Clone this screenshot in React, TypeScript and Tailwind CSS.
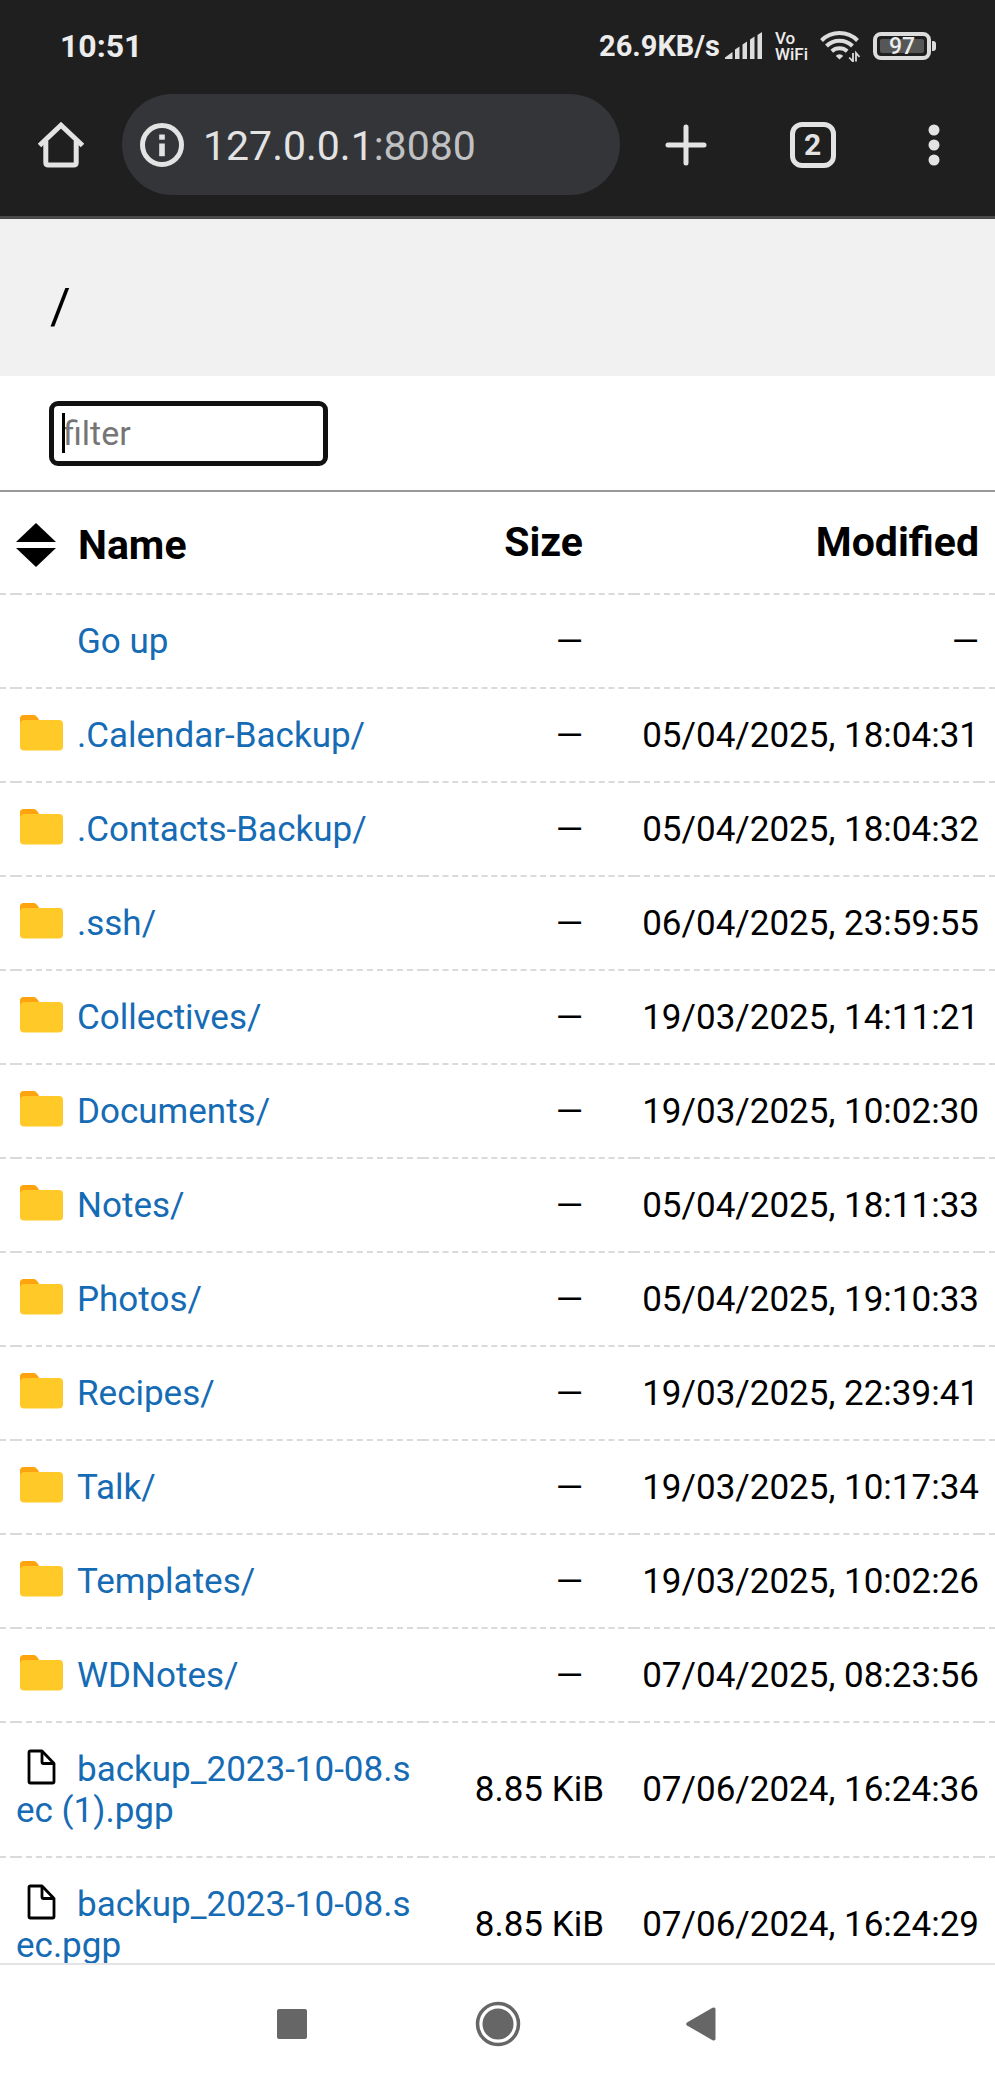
import React from "react";

type Entry = { name: string; kind: "up" | "folder" | "file"; size: string; modified: string };

const entries: Entry[] = [
  { name: "Go up", kind: "up", size: "—", modified: "—" },
  { name: ".Calendar-Backup/", kind: "folder", size: "—", modified: "05/04/2025, 18:04:31" },
  { name: ".Contacts-Backup/", kind: "folder", size: "—", modified: "05/04/2025, 18:04:32" },
  { name: ".ssh/", kind: "folder", size: "—", modified: "06/04/2025, 23:59:55" },
  { name: "Collectives/", kind: "folder", size: "—", modified: "19/03/2025, 14:11:21" },
  { name: "Documents/", kind: "folder", size: "—", modified: "19/03/2025, 10:02:30" },
  { name: "Notes/", kind: "folder", size: "—", modified: "05/04/2025, 18:11:33" },
  { name: "Photos/", kind: "folder", size: "—", modified: "05/04/2025, 19:10:33" },
  { name: "Recipes/", kind: "folder", size: "—", modified: "19/03/2025, 22:39:41" },
  { name: "Talk/", kind: "folder", size: "—", modified: "19/03/2025, 10:17:34" },
  { name: "Templates/", kind: "folder", size: "—", modified: "19/03/2025, 10:02:26" },
  { name: "WDNotes/", kind: "folder", size: "—", modified: "07/04/2025, 08:23:56" },
  { name: "backup_2023-10-08.sec (1).pgp", kind: "file", size: "8.85 KiB", modified: "07/06/2024, 16:24:36" },
  { name: "backup_2023-10-08.sec.pgp", kind: "file", size: "8.85 KiB", modified: "07/06/2024, 16:24:29" },
];

function SignalIcon() {
  return (
    <svg width="38" height="28" viewBox="0 0 38 28" fill="#dcdcdc" aria-hidden="true">
      <path d="M0 27V25.5L7.5 20V27Z" />
      <path d="M10 27V17.5L14.5 14.5V27Z" />
      <path d="M17.5 27V12.5L22 9.5V27Z" />
      <path d="M25 27V7.5L29.500 4.500V27Z" />
      <path d="M32.500 27V3L37 0V27Z" />
    </svg>
  );
}

function WifiIcon() {
  return (
    <svg width="40" height="32" viewBox="0 0 40 32" fill="none" stroke="#dcdcdc" strokeWidth="4" aria-hidden="true">
      <path d="M1.500 10.500A25.500 25.500 0 0 1 37.500 10.500" />
      <path d="M6.500 16A18.500 18.500 0 0 1 32.500 16" />
      <path d="M11.800 21.300A11.500 11.500 0 0 1 27.200 21.300" />
      <path d="M15.800 26A4.200 3.400 0 0 1 23.200 26L19.500 29.500Z" fill="#dcdcdc" stroke="none" />
      <path d="M33 23V31.500L29.200 27.500M36 31.500V23L39.500 27" strokeWidth="1.800" />
    </svg>
  );
}

function Battery() {
  return (
    <div className="flex items-center">
      <div className="flex h-7 w-[58px] items-center rounded-[8px] border-4 border-[#dcdcdc] p-[3px]">
        <span className="flex h-full w-full items-center justify-center rounded-[2px] bg-[#565656] text-[23px] leading-none font-medium">
          97
        </span>
      </div>
      <span className="ml-px h-[10px] w-1 rounded-r-[3px] bg-[#dcdcdc]" />
    </div>
  );
}

function StatusBar() {
  return (
    <div className="flex h-[94px] items-center justify-between pr-[59px] pb-[2px] pl-[60px] text-[#ececec]">
      <time className="text-[32px] leading-none font-bold">10:51</time>
      <div className="flex items-center">
        <span className="mr-[5px] text-[29px] leading-none font-bold">26.9KB/s</span>
        <SignalIcon />
        <span className="mr-3 ml-3 flex flex-col text-[17px] leading-4 font-medium">
          <span>Vo</span>
          <span>WiFi</span>
        </span>
        <WifiIcon />
        <span className="ml-[13px]">
          <Battery />
        </span>
      </div>
    </div>
  );
}

function Toolbar() {
  return (
    <div className="flex h-[101px] items-stretch text-[#e3e3e3]">
      <button type="button" aria-label="Home" className="flex w-[122px] items-center justify-center">
        <svg width="46" height="46" viewBox="0 0 46 46" fill="none" stroke="#e3e3e3" strokeWidth="5" aria-hidden="true">
          <path d="M1.500 23.500L23 3.200L44.500 23.500" />
          <path d="M7.800 19V40.500Q7.800 43 10.300 43H35.700Q38.200 43 38.200 40.500V19" />
        </svg>
      </button>
      <div className="flex min-w-0 flex-1 items-center rounded-full bg-[#343539] pl-[18px]">
        <svg width="44" height="44" viewBox="0 0 44 44" fill="none" aria-hidden="true">
          <circle cx="22" cy="22" r="19.500" stroke="#e3e3e3" strokeWidth="5" />
          <rect x="19.200" y="11.500" width="5.600" height="5.200" fill="#e3e3e3" />
          <rect x="19.200" y="20.500" width="5.600" height="12.700" fill="#e3e3e3" />
        </svg>
        <span className="ml-[19px] pt-[3px] text-[41px] leading-none">
          127.0.0.1<span className="text-[#c0c1c3]">:8080</span>
        </span>
      </div>
      <button type="button" aria-label="New tab" className="flex w-[132px] items-center justify-center">
        <svg width="42" height="42" viewBox="0 0 42 42" stroke="#e3e3e3" strokeWidth="5" strokeLinecap="round" aria-hidden="true">
          <path d="M21 3V39M3 21H39" />
        </svg>
      </button>
      <button type="button" aria-label="Switch tabs" className="flex w-[121px] items-center justify-center">
        <span className="flex size-[46px] items-center justify-center rounded-[12px] border-5 border-[#e3e3e3] text-[30px] leading-none font-bold">
          2
        </span>
      </button>
      <button type="button" aria-label="More" className="flex w-[122px] items-center justify-center">
        <svg width="12" height="42" viewBox="0 0 12 42" fill="#e3e3e3" aria-hidden="true">
          <circle cx="6" cy="6" r="5.500" />
          <circle cx="6" cy="21" r="5.500" />
          <circle cx="6" cy="36" r="5.500" />
        </svg>
      </button>
    </div>
  );
}

function SortIcon() {
  return (
    <svg width="40" height="44" viewBox="0 0 40 44" fill="#000" aria-hidden="true">
      <path d="M0 19L20 0L40 19Z" />
      <path d="M0 25H40L20 44Z" />
    </svg>
  );
}

function EntryIcon({ kind }: { kind: Entry["kind"] }) {
  if (kind === "up") return <span className="inline-block w-[61px]" />;
  if (kind === "folder") {
    return (
      <svg className="mr-[14px] -mt-[10px] ml-1 inline-block" width="43" height="36" viewBox="0 0 43 36" aria-hidden="true">
        <path d="M0 12V4Q0 0 4 0H13.500Q15.500 0 17 2L21 8V12Z" fill="#ffa000" />
        <rect x="0" y="5" width="43" height="30.500" rx="4" fill="#ffca28" />
        <path d="M0 9V4Q0 .5 4 .5H13.500Q15.500 .5 17 2.200L19 5H4Q0 5 0 9Z" fill="#ffa30f" />
      </svg>
    );
  }
  return (
    <svg
      className="mr-[21px] -mt-[10px] ml-[11px] inline-block"
      width="29"
      height="36"
      viewBox="0 0 29 36"
      fill="none"
      stroke="#000"
      strokeWidth="2.800"
      strokeLinejoin="round"
      aria-hidden="true"
    >
      <path d="M3.500 2H15L27 14.500V32.500Q27 34 25.500 34H3.500Q2 34 2 32.500V3.500Q2 2 3.500 2Z" />
      <path d="M15 2V13Q15 14.500 16.500 14.500H27" />
    </svg>
  );
}

function Listing() {
  const line = "border-b-2 border-dashed border-[#dadada]";
  return (
    <table className="w-full table-fixed border-separate border-spacing-0 text-[35px] leading-[41px]">
      <colgroup>
        <col className="w-4" />
        <col />
        <col className="w-[211px]" />
        <col className="w-[345px]" />
        <col className="w-4" />
      </colgroup>
      <thead>
        <tr className="h-[103px] text-[41px] leading-[47px]">
          <td className={line} />
          <th scope="col" className={`${line} pt-[5px] text-left font-bold`}>
            <span className="flex items-center gap-[22px]">
              <button type="button" aria-label="Sort">
                <SortIcon />
              </button>
              <a href="#name">Name</a>
            </span>
          </th>
          <th scope="col" className={`${line} pr-[51px] text-right font-bold`}>
            <a href="#size">Size</a>
          </th>
          <th scope="col" className={`${line} text-right font-bold`}>
            <a href="#modified">Modified</a>
          </th>
          <td className={line} />
        </tr>
      </thead>
      <tbody>
        {entries.map((e) => (
          <tr key={e.name}>
            <td className={line} />
            <td className={`${line} pt-[26px] pb-[25px] break-all`}>
              <a href="#entry" className="text-[#166bb5]">
                <EntryIcon kind={e.kind} />
                {e.name}
              </a>
            </td>
            <td className={`${line} text-right whitespace-nowrap ${e.kind === "file" ? "pr-[30px]" : "pr-[51px]"}`}>
              {e.size}
            </td>
            <td className={`${line} text-right whitespace-nowrap`}>
              {e.kind === "up" ? e.modified : <time>{e.modified}</time>}
            </td>
            <td className={line} />
          </tr>
        ))}
      </tbody>
    </table>
  );
}

function SystemNav() {
  return (
    <nav className="flex h-[120px] shrink-0 items-center justify-center border-t-2 border-[#e4e4e4] bg-white">
      <button type="button" aria-label="Recent apps" className="flex w-[206px] justify-center">
        <span className="size-[30px] rounded-[2px] bg-[#666]" />
      </button>
      <button type="button" aria-label="Home screen" className="flex w-[206px] justify-center">
        <svg width="46" height="46" viewBox="0 0 46 46" fill="none" aria-hidden="true">
          <circle cx="23" cy="23" r="20.500" stroke="#666" strokeWidth="3.500" />
          <circle cx="23" cy="23" r="15.500" fill="#666" />
        </svg>
      </button>
      <button type="button" aria-label="Back" className="flex w-[206px] justify-center">
        <svg width="36" height="34" viewBox="0 0 36 34" fill="#666" aria-hidden="true">
          <path d="M1 15.600L26.500 .8Q29.500 -.3 29.500 2.500V31.500Q29.500 34.300 26.500 33.200L1 18.400Q-.6 17 1 15.600Z" />
        </svg>
      </button>
    </nav>
  );
}

export default function App() {
  return (
    <div className="flex h-screen flex-col overflow-hidden bg-white font-[Roboto,sans-serif] text-black">
      <div className="shrink-0 border-b-3 border-[#4a4a4a] bg-[#1f1f1f] pb-[21px]">
        <StatusBar />
        <Toolbar />
      </div>
      <div className="min-h-0 flex-1 overflow-y-auto [scrollbar-width:none]">
        <header className="flex h-[157px] items-center bg-[#f1f1f1] px-[50px] pt-5">
          <h1 className="text-[50px] leading-[59px] font-normal">
            <a href="#root">/</a>
          </h1>
        </header>
        <main>
          <div className="flex h-[116px] items-center border-b-2 border-[#999] px-[49px]">
            <div className="relative flex items-center">
              <input
                type="text"
                aria-label="Filter entries"
                placeholder="filter"
                className="h-[65px] w-[279px] rounded-[9px] border-5 border-[#111] bg-white px-[9px] text-[34px] leading-[41px] caret-transparent outline-none placeholder:text-[#757575]"
              />
              <span className="absolute left-[13px] h-10 w-[3px] bg-black" />
            </div>
          </div>
          <Listing />
        </main>
      </div>
      <SystemNav />
    </div>
  );
}
